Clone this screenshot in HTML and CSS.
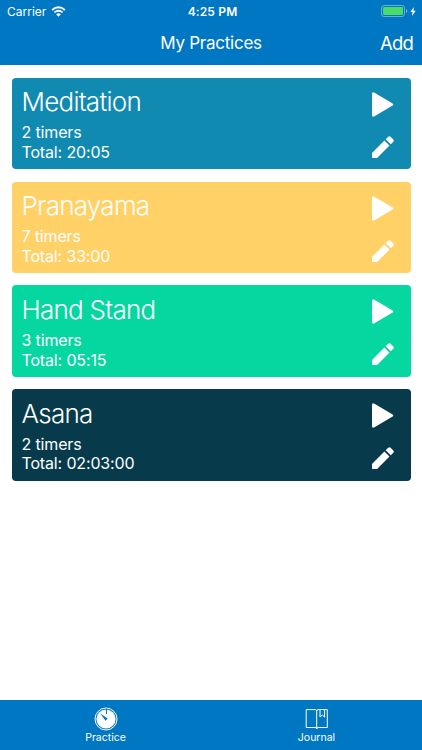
FILE: index.html
```
<!DOCTYPE html>
<html lang="en">
<head>
  <meta charset="UTF-8">
  <meta name="viewport" content="width=device-width, initial-scale=1.0">
  <link rel="stylesheet" href="styles.css">
  <title>My Practices</title>
</head>
<body>

  <!-- Shared icons for the practice cards -->
  <svg class="icon-defs">
    <symbol id="play" viewBox="0 0 24 28">
      <path d="M1 3.200Q1 .4 3.500 1.700L21.200 12.200Q23.400 13.500 21.200 14.800L3.500 25.300Q1 26.600 1 23.800Z" />
    </symbol>
    <symbol id="pencil" viewBox="0 0 22 22">
      <path d="M0 16.900L12.400 4.500L17.500 9.600L5.100 22H.8Q0 22 0 21.200ZM13.700 3.200L16.200.7Q17.400-.3 18.600.7L21.300 3.400Q22.300 4.600 21.300 5.800L18.800 8.300Z" />
    </symbol>
  </svg>

  <header>
    <div class="status-bar">
      <div class="carrier">
        <span>Carrier</span>
        <svg class="wifi" viewBox="0 0 16 12">
          <path d="M1 4.400Q8-1.600 15 4.400M3.500 7Q8 3.200 12.500 7" />
          <path class="wifi-dot" d="M5.400 8.900Q8 6.900 10.600 8.900L8 11.600Z" />
        </svg>
      </div>
      <span class="time">4:25 PM</span>
      <div class="power">
        <svg class="battery" viewBox="0 0 27 12">
          <rect class="battery-case" x=".5" y=".5" width="23" height="11" rx="2.500" />
          <rect class="battery-level" x="2" y="2" width="20" height="8" rx="1" />
          <path class="battery-tip" d="M25 4v4q1.500-.5 1.500-2T25 4z" />
        </svg>
        <svg class="bolt" viewBox="0 0 6 10">
          <path d="M4 0L0 5.600h2.500L1.800 10 6 4.200H3.400z" />
        </svg>
      </div>
    </div>
    <div class="nav-bar">
      <h1>My Practices</h1>
      <button class="add-btn">Add</button>
    </div>
  </header>

  <main>
    <div class="card meditation">
      <div>
        <h2>Meditation</h2>
        <p>2 timers</p>
        <p>Total: 20:05</p>
      </div>
      <div class="actions">
        <svg class="play"><use href="#play" /></svg>
        <svg class="pencil"><use href="#pencil" /></svg>
      </div>
    </div>
    <div class="card pranayama">
      <div>
        <h2>Pranayama</h2>
        <p>7 timers</p>
        <p>Total: 33:00</p>
      </div>
      <div class="actions">
        <svg class="play"><use href="#play" /></svg>
        <svg class="pencil"><use href="#pencil" /></svg>
      </div>
    </div>
    <div class="card hand-stand">
      <div>
        <h2>Hand Stand</h2>
        <p>3 timers</p>
        <p>Total: 05:15</p>
      </div>
      <div class="actions">
        <svg class="play"><use href="#play" /></svg>
        <svg class="pencil"><use href="#pencil" /></svg>
      </div>
    </div>
    <div class="card asana">
      <div>
        <h2>Asana</h2>
        <p>2 timers</p>
        <p>Total: 02:03:00</p>
      </div>
      <div class="actions">
        <svg class="play"><use href="#play" /></svg>
        <svg class="pencil"><use href="#pencil" /></svg>
      </div>
    </div>
  </main>

  <footer>
    <div class="tab">
      <svg viewBox="0 0 24 24">
        <circle class="outline" cx="12" cy="12" r="11" />
        <circle class="dial" cx="12" cy="12" r="9.600" />
        <path class="hand" d="M12.500 1.500v5.500" />
        <path class="needle" d="M6 6.300l7.600 5.200-2 2.300z" />
      </svg>
      <span>Practice</span>
    </div>
    <div class="tab">
      <svg viewBox="0 0 24 24">
        <path class="outline" d="M1.200 2.600H10.200Q11.700 2.600 11.700 4Q11.700 2.600 13.200 2.600H22.300V20.500H13.200Q11.700 20.500 11.700 22Q11.700 20.500 10.200 20.500H1.200ZM11.700 4V22M15 2.600V10L17.300 8L19.600 10V2.600" />
      </svg>
      <span>Journal</span>
    </div>
  </footer>

</body>
</html>
```
FILE: styles.css
```
* {
  box-sizing: border-box;
}

body {
  font-family: Inter, "Liberation Sans", sans-serif;
  background-color: white;
  color: white;
  margin: 0;
  height: 100vh;
  display: flex;
  flex-direction: column;
}

h1, h2, p {
  margin: 0;
  font-weight: 400;
}

.icon-defs {
  display: none;
}

header {
  height: 65px;
  background-color: #0077c2;
}

.status-bar {
  height: 22px;
  padding: 0 6px 0 7px;
  display: grid;
  grid-template-columns: 1fr auto 1fr;
  align-items: center;
  font-size: 12px;
}

.carrier {
  display: flex;
  align-items: center;
  gap: 5px;
}

.wifi {
  width: 15px;
  height: 11px;
  fill: none;
  stroke: white;
  stroke-width: 2;
}

.wifi-dot {
  fill: white;
  stroke: none;
}

.time {
  padding-left: 2px;
  font-weight: 600;
  letter-spacing: 0.15px;
}

.power {
  display: flex;
  justify-content: flex-end;
  align-items: center;
  gap: 2px;
}

.battery {
  width: 27px;
  height: 12px;
}

.battery-case {
  fill: none;
  stroke: #68addb;
}

.battery-level {
  fill: #4cd964;
}

.battery-tip {
  fill: #68addb;
}

.bolt {
  width: 6px;
  height: 9px;
  fill: white;
}

.nav-bar {
  height: 42px;
  padding: 0 9px;
  display: grid;
  grid-template-columns: 1fr auto 1fr;
  align-items: center;
}

h1 {
  grid-column: 2;
  font-size: 17px;
  letter-spacing: -0.25px;
}

.add-btn {
  justify-self: end;
  padding: 0;
  border: none;
  background: none;
  color: white;
  font: inherit;
  font-size: 18.5px;
  letter-spacing: -0.8px;
}

main {
  flex: 1;
  padding: 12.700px 11.500px;
  display: flex;
  flex-direction: column;
  gap: 12.300px;
}

.card {
  height: 91.600px;
  padding: 7.300px 16px 0 10px;
  border-radius: 4px;
  display: flex;
  justify-content: space-between;
}

.card h2 {
  font-size: 26px;
  font-weight: 350;
  line-height: 34px;
  letter-spacing: -0.75px;
  margin-bottom: 4.300px;
}

.card p {
  font-size: 16px;
  line-height: 19.500px;
  letter-spacing: -0.15px;
}

.meditation {
  background-color: #118ab2;
}

.pranayama {
  background-color: #ffd166;
}

.hand-stand {
  background-color: #06d6a0;
}

.asana {
  background-color: #073b4c;
}

.actions {
  display: flex;
  flex-direction: column;
  align-items: center;
  padding-top: 5.700px;
  gap: 17px;
  fill: white;
}

.play {
  width: 24px;
  height: 28px;
}

.pencil {
  width: 22px;
  height: 22px;
}

footer {
  height: 50px;
  background-color: #0077c2;
  display: flex;
}

.tab {
  flex: 1;
  display: flex;
  flex-direction: column;
  align-items: center;
  padding-top: 7px;
  font-size: 10.500px;
  line-height: 13px;
}

.tab svg {
  width: 24px;
  height: 24px;
}

.outline {
  fill: none;
  stroke: white;
}

.dial {
  fill: white;
}

.hand {
  stroke: #0077c2;
}

.needle {
  fill: #0077c2;
}
```
